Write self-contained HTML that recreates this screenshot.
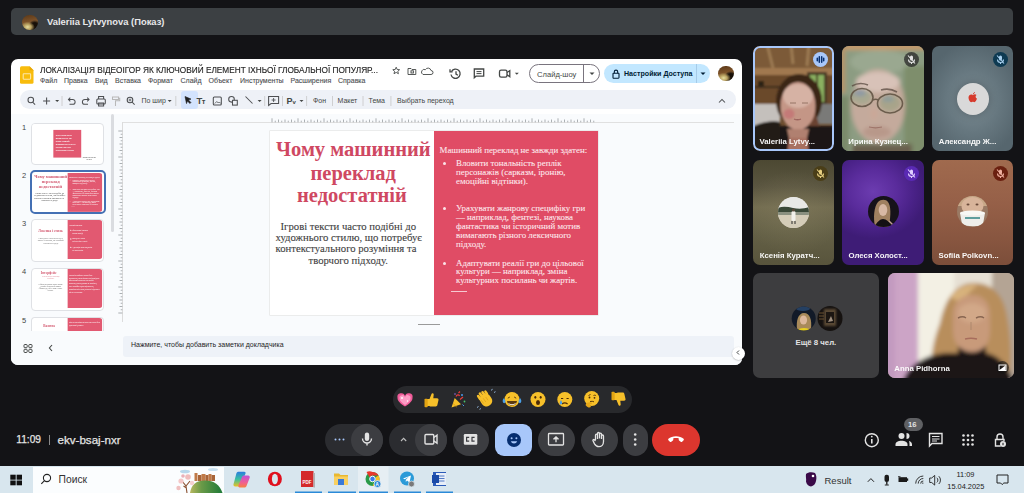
<!DOCTYPE html>
<html><head><meta charset="utf-8">
<style>
*{margin:0;padding:0;box-sizing:border-box}
html,body{width:1024px;height:493px;overflow:hidden;background:#131316;font-family:"Liberation Sans",sans-serif}
body{position:relative}
.a{position:absolute;white-space:nowrap}
svg.a{overflow:visible}
.tile{position:absolute;border-radius:7px;overflow:hidden}
.nm{position:absolute;left:7px;top:91px;color:#fff;font-size:7.8px;font-weight:bold;opacity:.95;white-space:nowrap}
.mute{position:absolute;width:15px;height:15px;border-radius:50%;top:6px;left:59px}
.av{position:absolute;border-radius:50%;overflow:hidden}
.cb{position:absolute;top:424px;height:32px;border-radius:16px;background:#333438}
.m{position:absolute;top:77px;font-size:7px;color:#4a4d50;-webkit-text-stroke:0.1px #4a4d50;white-space:nowrap}
.tb{position:absolute;top:96.5px;font-size:7px;color:#444746;white-space:nowrap}
</style></head><body>
<!-- slides window -->
<div class="a" style="left:11px;top:59px;width:731px;height:306px;background:#fff;border-radius:7px"></div>
<div class="a" style="left:11px;top:114px;width:731px;height:251px;background:#f9fbfd;border-radius:0 0 7px 7px"></div>
<svg class="a" style="left:20px;top:66px" width="14" height="18" viewBox="0 0 14 18">
  <path d="M1.5 0.3h8l4 4v12a1.5 1.5 0 0 1-1.5 1.5h-10.5A1.5 1.5 0 0 1 0 16.3v-14.5A1.5 1.5 0 0 1 1.5 0.3z" fill="#f8bc0c"/>
  <path d="M9.5 0.3v4h4z" fill="#e8a80a"/>
  <rect x="3.2" y="7.8" width="7.4" height="5.4" rx="0.6" fill="none" stroke="#fde6a6" stroke-width="1.1"/>
</svg>
<div id="ttl" class="a" style="left:40px;top:64.2px;font-size:9.6px;color:#1f1f1f;-webkit-text-stroke:0.15px #1f1f1f;transform:scaleX(0.86);transform-origin:0 0">ЛОКАЛІЗАЦІЯ ВІДЕОІГОР ЯК КЛЮЧОВИЙ ЕЛЕМЕНТ ІХНЬОЇ ГЛОБАЛЬНОЇ ПОПУЛЯР...</div>
<div class="m" style="left:40px">Файл</div>
<div class="m" style="left:64px">Правка</div>
<div class="m" style="left:95px">Вид</div>
<div class="m" style="left:115px">Вставка</div>
<div class="m" style="left:148px">Формат</div>
<div class="m" style="left:180.5px">Слайд</div>
<div class="m" style="left:208.5px">Объект</div>
<div class="m" style="left:240px">Инструменты</div>
<div class="m" style="left:290.5px">Расширения</div>
<div class="m" style="left:338px">Справка</div>
<!-- title icons -->
<svg class="a" style="left:0;top:0" width="1" height="1" fill="none" stroke="#444746" stroke-width="0.9">
  <path d="M396.2 67.2l1 2.3 2.4.2-1.8 1.6.6 2.4-2.2-1.3-2.2 1.3.6-2.4-1.8-1.6 2.4-.2z"/>
  <path d="M408 68.5h3l1 1h3.8v5H408z"/><rect x="411" y="70.8" width="2.4" height="2.2"/>
  <path d="M423 74.5h8a2 2 0 0 0 0-4 3 3 0 0 0-5.6-.8A2.4 2.4 0 0 0 423 74.5z"/>
</svg>
<svg class="a" style="left:0;top:0" width="1" height="1" fill="none" stroke="#444746" stroke-width="1.3">
  <path d="M451.5 71.5A4.6 4.6 0 1 1 451 74.5"/><path d="M450 69.3v2.6h2.6"/><path d="M456 71.3v2.8l1.9 1.2"/>
  <path d="M474.3 69h9.4v7.2h-7.8l-1.6 1.6z"/><path d="M476.5 71.6h5M476.5 73.6h5" stroke-width="1"/>
  <rect x="499.5" y="70.2" width="7.5" height="7" rx="1.6"/><path d="M507 72.5l2.8-1.8v6l-2.8-1.8"/>
  <path d="M514.8 72.8h4l-2 2z" fill="#444746" stroke="none"/>
</svg>
<!-- slideshow button -->
<div class="a" style="left:529px;top:64px;width:71px;height:19px;border:1px solid #79747e;border-radius:10px;background:#fff"></div>
<div class="a" style="left:583px;top:65px;width:1px;height:17px;background:#79747e"></div>
<div id="ss" class="a" style="left:537px;top:69.5px;font-size:7.6px;color:#444746">Слайд-шоу</div>
<svg class="a" style="left:588.5px;top:72px" width="6" height="4"><path d="M0.5 0.5h5l-2.5 2.5z" fill="#444746"/></svg>
<!-- share button -->
<div class="a" style="left:604px;top:64.3px;width:106px;height:18.5px;background:#c2e7ff;border-radius:10px"></div>
<div class="a" style="left:695.5px;top:64px;width:1px;height:19px;background:#a6cbe8"></div>
<svg class="a" style="left:611.5px;top:68.5px" width="8" height="10" viewBox="0 0 8 10" fill="none" stroke="#001d35" stroke-width="1.1"><rect x="1" y="4.2" width="6" height="5" rx="0.6"/><path d="M2.3 4.2V2.8a1.7 1.7 0 0 1 3.4 0v1.4"/></svg>
<div id="sh" class="a" style="left:624px;top:69.5px;font-size:7.1px;font-weight:bold;color:#001d35">Настройки Доступа</div>
<svg class="a" style="left:699.5px;top:72px" width="6" height="4"><path d="M0.5 0.5h5l-2.5 2.5z" fill="#001d35"/></svg>
<!-- avatar -->
<div class="a" style="left:718px;top:65.7px;width:15.5px;height:15.5px;border-radius:50%;background:radial-gradient(ellipse 45% 35% at 35% 80%,#e8e0a0 0,#b8a060 50%,rgba(0,0,0,0) 100%),radial-gradient(circle at 80% 80%,#181008 0,#181008 25%,rgba(0,0,0,0) 40%),linear-gradient(170deg,#5a3818 0,#7a5028 40%,#8a6a40 70%,#c0b080 100%)"></div>

<!-- toolbar -->
<div class="a" style="left:20px;top:90.3px;width:716px;height:18.7px;background:#eef1f7;border-radius:9.5px"></div>
<div class="a" style="left:181px;top:91px;width:17px;height:18px;background:#d3e3fd;border-radius:3px"></div>
<svg class="a" style="left:0;top:0.8px" width="1" height="1" fill="none" stroke="#4d4f52" stroke-width="1.05">
  <circle cx="30.8" cy="99" r="2.8"/><path d="M32.5 101l2.6 2.6"/>
  <path d="M46.6 96.5v7M43.1 100h7"/>
  <path d="M55.2 99h4l-2 2z" fill="#444746" stroke="none"/>
  <path d="M62 95v10" stroke="#c7c7c7" stroke-width="0.8"/>
  <path d="M68.5 98.5h4.2a2.4 2.4 0 0 1 0 4.8H69.5"/><path d="M70.3 96.7L68.5 98.5l1.8 1.8"/>
  <path d="M89 98.5h-4.2a2.4 2.4 0 0 0 0 4.8H88"/><path d="M87.2 96.7L89 98.5l-1.8 1.8"/>
  <rect x="96.8" y="98" width="8.5" height="5" rx="1"/><path d="M98.6 98v-2.5h5V98M98.6 102h5v3h-5z"/>
  <path d="M112.5 96h6v2.5h-6zM118.5 97.3h1.2v2.5h-4.2v1.5M115.5 101.3v3.7" stroke="#b8b8b8"/>
  <circle cx="130" cy="99" r="2.8"/><path d="M132 101l2.6 2.6"/><path d="M128.6 99h2.8M130 97.6v2.8" stroke-width="0.8"/>
  <path d="M167.7 99h4l-2 2z" fill="#444746" stroke="none"/>
  <path d="M175.8 95v10" stroke="#c7c7c7" stroke-width="0.8"/>
  <path d="M185 95.5l6 2.6-2.5 1 2.4 2.4-1 1-2.4-2.4-1 2.5z" fill="#1f1f1f" stroke="#1f1f1f" stroke-width="0.6"/>
  <rect x="213.3" y="96" width="8" height="8" rx="1"/><path d="M214.8 102.5l2-2 1.5 1.5 1-1 1.5 1.5" stroke-width="0.8"/>
  <circle cx="231.5" cy="98.3" r="2.8"/><rect x="232.5" y="99.3" width="4.8" height="4.8" fill="#eef1f7"/>
  <path d="M245.5 95.5l7 7"/>
  <path d="M257.6 99h4l-2 2z" fill="#444746" stroke="none"/>
  <path d="M264.7 95v10" stroke="#c7c7c7" stroke-width="0.8"/>
  <path d="M268.6 95.5h10v7h-7.5l-2.5 2z"/><path d="M273.6 97v4M271.6 99h4" stroke-width="0.9"/>
  <path d="M282.5 95v10" stroke="#c7c7c7" stroke-width="0.8"/>
  <path d="M299.5 99h4l-2 2z" fill="#444746" stroke="none"/>
  <path d="M306.6 95v10M332.5 95v10M363 95v10M390.9 95v10" stroke="#c7c7c7" stroke-width="0.8"/>
  <path d="M719 101.5l3-3 3 3"/>
</svg>
<div class="a" style="left:196.5px;top:95px;font-size:9.5px;font-weight:bold;color:#444746;letter-spacing:-0.5px">T<span style="font-size:7.5px">т</span></div>
<div class="a" style="left:286.5px;top:95.5px;font-size:9px;font-weight:bold;color:#444746">P<span style="font-size:6px">v</span></div>
<div class="tb" style="left:141.5px">По шир</div>
<div class="tb" style="left:313px">Фон</div>
<div class="tb" style="left:337.5px">Макет</div>
<div class="tb" style="left:368.5px">Тема</div>
<div class="tb" style="left:397px">Выбрать переход</div>
<style>
.sl{position:absolute;width:328px;height:184.5px;background:#fff}
.sl .rp{position:absolute;background:#e04c65}
.st{position:absolute;white-space:nowrap;line-height:1;font-family:"Liberation Serif",serif}
.t1{font-size:20.5px;font-weight:bold;color:#cf4862}
.t2{font-size:10.7px;color:#3e3e3e;-webkit-text-stroke:0.1px #3e3e3e}
.t3{font-size:8.9px;color:#fde9ed;-webkit-text-stroke:0.08px #fde9ed}
.dot{position:absolute;width:3px;height:3px;border-radius:50%;background:#fbe4e8}
.ln{position:absolute;width:16.5px;height:1px;background:#f6c9d1}
</style>
<div class="sl" style="left:269.5px;top:130.5px;box-shadow:0 0 0 0.6px #e2e2e2">
<div class="rp" style="left:164.3px;top:0.3px;width:163.8px;height:184px"></div>
<div class="st t1" style="left:6.5px;top:8.3px">Чому машинний</div>
<div class="st t1" style="left:41.0px;top:32.1px">переклад</div>
<div class="st t1" style="left:27.5px;top:54.2px">недостатній</div>
<div class="st t2" style="left:11.0px;top:90.1px">Ігрові тексти часто подібні до</div>
<div class="st t2" style="left:6.0px;top:101.3px">художнього стилю, що потребує</div>
<div class="st t2" style="left:6.0px;top:112.9px">контекстуального розуміння та</div>
<div class="st t2" style="left:39.0px;top:124.1px">творчого підходу.</div>
<div class="st t3" style="left:170.0px;top:15.0px">Машинний переклад не завжди здатен:</div>
<div class="dot" style="left:173.7px;top:31.5px"></div>
<div class="st t3" style="left:186.5px;top:28.6px">Вловити тональність реплік</div>
<div class="st t3" style="left:186.5px;top:37.3px">персонажів (сарказм, іронію,</div>
<div class="st t3" style="left:186.5px;top:46.2px">емоційні відтінки).</div>
<div class="dot" style="left:173.7px;top:76.5px"></div>
<div class="st t3" style="left:186.5px;top:73.7px">Урахувати жанрову специфіку гри</div>
<div class="st t3" style="left:186.5px;top:82.3px">— наприклад, фентезі, наукова</div>
<div class="st t3" style="left:186.5px;top:91.8px">фантастика чи історичний мотив</div>
<div class="st t3" style="left:186.5px;top:100.3px">вимагають різного лексичного</div>
<div class="st t3" style="left:186.5px;top:109.5px">підходу.</div>
<div class="dot" style="left:173.7px;top:131.5px"></div>
<div class="st t3" style="left:186.5px;top:128.0px">Адаптувати реалії гри до цільової</div>
<div class="st t3" style="left:186.5px;top:136.7px">культури — наприклад, зміна</div>
<div class="st t3" style="left:186.5px;top:145.0px">культурних посилань чи жартів.</div>
<div class="ln" style="left:181.0px;top:160.0px"></div>
</div>
<!-- left panel thumbnails -->
<div class="a" style="left:22px;top:123px;font-size:7.5px;color:#444746">1</div>
<div class="a" style="left:22px;top:171px;font-size:7.5px;color:#444746">2</div>
<div class="a" style="left:22px;top:219px;font-size:7.5px;color:#444746">3</div>
<div class="a" style="left:22px;top:267px;font-size:7.5px;color:#444746">4</div>
<div class="a" style="left:22px;top:316px;font-size:7.5px;color:#444746">5</div>
<!-- thumb 1 -->
<div class="a" style="left:31px;top:122.5px;width:73px;height:42.5px;background:#fff;border:1px solid #dfe1e5;border-radius:4px"></div>
<div class="sl" style="left:32.3px;top:123.5px;transform:scale(0.2112);transform-origin:0 0;border-radius:14px;overflow:hidden;opacity:0.92">
<div class="rp" style="left:101px;top:27.5px;width:132px;height:131.5px"></div>
<div class="st" style="left:113px;top:44px;font-size:12px;font-weight:bold;color:#fff;line-height:14.5px;font-family:'Liberation Sans',sans-serif;transform:scaleX(0.9);transform-origin:0 0">ЛОКАЛІЗАЦІЯ<br>ВІДЕОІГОР ЯК<br>КЛЮЧОВИЙ<br>ЕЛЕМЕНТ ЇХНЬОЇ<br>ГЛОБАЛЬНОЇ<br>ПОПУЛЯРНОСТІ</div>
<div class="st" style="left:240px;top:157px;font-size:7px;color:#333;line-height:8px;text-align:center;font-family:'Liberation Sans',sans-serif">Литвинова Валерія<br>ЛЗ-21-1</div>

</div>
<!-- thumb 2 (selected) -->
<div class="a" style="left:30px;top:170.3px;width:75.5px;height:43.5px;background:#fff;border:2px solid #4470b4;border-radius:5px"></div>
<div class="sl" style="left:33.3px;top:173.3px;transform:scale(0.2112);transform-origin:0 0;border-radius:14px;overflow:hidden;opacity:0.92">
<div class="rp" style="left:164.3px;top:0.3px;width:163.8px;height:184px"></div>
<div class="st t1" style="left:6.5px;top:8.3px">Чому машинний</div>
<div class="st t1" style="left:41.0px;top:32.1px">переклад</div>
<div class="st t1" style="left:27.5px;top:54.2px">недостатній</div>
<div class="st t2" style="left:11.0px;top:90.1px">Ігрові тексти часто подібні до</div>
<div class="st t2" style="left:6.0px;top:101.3px">художнього стилю, що потребує</div>
<div class="st t2" style="left:6.0px;top:112.9px">контекстуального розуміння та</div>
<div class="st t2" style="left:39.0px;top:124.1px">творчого підходу.</div>
<div class="st t3" style="left:170.0px;top:15.0px">Машинний переклад не завжди здатен:</div>
<div class="dot" style="left:173.7px;top:31.5px"></div>
<div class="st t3" style="left:186.5px;top:28.6px">Вловити тональність реплік</div>
<div class="st t3" style="left:186.5px;top:37.3px">персонажів (сарказм, іронію,</div>
<div class="st t3" style="left:186.5px;top:46.2px">емоційні відтінки).</div>
<div class="dot" style="left:173.7px;top:76.5px"></div>
<div class="st t3" style="left:186.5px;top:73.7px">Урахувати жанрову специфіку гри</div>
<div class="st t3" style="left:186.5px;top:82.3px">— наприклад, фентезі, наукова</div>
<div class="st t3" style="left:186.5px;top:91.8px">фантастика чи історичний мотив</div>
<div class="st t3" style="left:186.5px;top:100.3px">вимагають різного лексичного</div>
<div class="st t3" style="left:186.5px;top:109.5px">підходу.</div>
<div class="dot" style="left:173.7px;top:131.5px"></div>
<div class="st t3" style="left:186.5px;top:128.0px">Адаптувати реалії гри до цільової</div>
<div class="st t3" style="left:186.5px;top:136.7px">культури — наприклад, зміна</div>
<div class="st t3" style="left:186.5px;top:145.0px">культурних посилань чи жартів.</div>
<div class="ln" style="left:181.0px;top:160.0px"></div>
</div>
<!-- thumb 3 -->
<div class="a" style="left:31.4px;top:219.4px;width:73px;height:42.6px;background:#fff;border:1px solid #dfe1e5;border-radius:4px"></div>
<div class="sl" style="left:32.5px;top:220.4px;transform:scale(0.2112);transform-origin:0 0;border-radius:14px;overflow:hidden;opacity:0.92">
<div class="rp" style="left:164.3px;top:0;width:163.7px;height:184.5px"></div>
<div class="st" style="left:25px;top:44px;font-size:16px;font-weight:bold;color:#d04a63">Лексика і стиль</div>
<div class="st" style="left:22px;top:80px;font-size:8px;color:#444;line-height:11.8px;text-align:center;width:126px;white-space:normal">Ігрові діалоги часто містять сленг, жаргон і неологізми, що потребують креативного підходу</div>
<div class="st" style="left:172px;top:22px;font-size:7.5px;font-weight:bold;color:#fbe4e8">Основні виклики:</div>
<div class="st" style="left:186px;top:43px;font-size:8px;font-weight:bold;color:#fbe4e8;line-height:12.5px">Збереження ігрового<br>стилю оповіді</div>
<div class="st" style="left:186px;top:84px;font-size:8px;font-weight:bold;color:#fbe4e8;line-height:12.5px">Передача гумору<br>та ігор слів у тексті</div>
<div class="st" style="left:186px;top:124px;font-size:8px;font-weight:bold;color:#fbe4e8;line-height:12.5px">Адаптація назв предметів<br>та персонажів</div>
<div class="dot" style="left:176px;top:46px;width:6px;height:6px"></div><div class="dot" style="left:176px;top:87px;width:6px;height:6px"></div><div class="dot" style="left:176px;top:127px;width:6px;height:6px"></div>

</div>
<!-- thumb 4 -->
<div class="a" style="left:31.4px;top:268.4px;width:73px;height:42.2px;background:#fff;border:1px solid #dfe1e5;border-radius:4px"></div>
<div class="sl" style="left:32.5px;top:269.4px;transform:scale(0.2112);transform-origin:0 0;border-radius:14px;overflow:hidden;opacity:0.92">
<div class="rp" style="left:164.3px;top:0;width:163.7px;height:184.5px"></div>
<div class="st" style="left:37px;top:10px;font-size:16px;font-weight:bold;color:#d04a63">Інтерфейс</div>
<div class="st" style="left:28px;top:29px;font-size:7px;color:#d86a7e;line-height:11px;text-align:center;width:112px;white-space:normal">технічні аспекти локалізації інтерфейсу</div>
<div class="st" style="left:14px;top:70px;font-size:7px;color:#444;line-height:9.6px;text-align:center;width:138px;white-space:normal">• Обмеження довжини рядків і кнопок<br>• Шрифти та кодування символів<br>• Формати дат, чисел і валют у різних регіонах</div>
<div class="st" style="left:170px;top:22px;font-size:8px;font-weight:bold;color:#fbe4e8;line-height:13.6px;width:150px;white-space:normal">Тексти інтерфейсу мають бути короткими, зрозумілими та відповідати обмеженням простору на екрані. Переклад часто довший за оригінал, тому потрібна адаптація макета, перевірка всіх меню, кнопок і підказок у грі та тестування.</div>

</div>
<!-- thumb 5 (cut) -->
<div class="a" style="left:31.4px;top:317px;width:73px;height:14px;background:#fff;border:1px solid #dfe1e5;border-bottom:none;border-radius:4px 4px 0 0"></div>
<div class="sl" style="left:32.5px;top:318px;transform:scale(0.2112);transform-origin:0 0;border-radius:14px;overflow:hidden;opacity:0.92">
<div class="rp" style="left:164.3px;top:0;width:163.7px;height:184.5px"></div>
<div class="st" style="left:48px;top:31px;font-size:16px;font-weight:bold;color:#d04a63">Валюта</div>
<div class="st" style="left:170px;top:17px;font-size:7.5px;font-weight:bold;color:#fbe4e8;line-height:13.5px;width:150px;white-space:normal">Ціни та внутрішня валюта гри мають бути адаптовані до ринку</div>

</div>
<!-- panel bottom cover -->
<div class="a" style="left:11px;top:331px;width:100px;height:33px;background:#f9fbfd;border-radius:0 0 0 7px"></div>
<svg class="a" style="left:0;top:0" width="1" height="1" fill="none" stroke="#444746" stroke-width="1">
  <rect x="24" y="344.5" width="3.2" height="3.2" rx="0.8"/><rect x="28.8" y="344.5" width="3.2" height="3.2" rx="0.8"/>
  <rect x="24" y="349.3" width="3.2" height="3.2" rx="0.8"/><rect x="28.8" y="349.3" width="3.2" height="3.2" rx="0.8"/>
  <path d="M52 345l-2.6 3 2.6 3" stroke-width="1.1"/>
</svg>
<!-- scrollbar -->
<div class="a" style="left:111px;top:114px;width:3px;height:118px;background:#dadce0;border-radius:2px"></div>

<!-- canvas -->
<div class="a" style="left:122px;top:122px;width:612px;height:1px;background:#e0e0e0"></div>
<div class="a" style="left:122px;top:122px;width:1px;height:200px;background:#dcdcdc"></div>
<svg class="a" style="left:0;top:0" width="1" height="1" stroke="#80868b" stroke-width="0.65">
  <path d="M272.00 118.30v4M275.25 120.70v1.6M278.50 119.50v2.8M281.75 120.70v1.6M285.00 119.50v2.8M288.25 120.70v1.6M291.50 119.50v2.8M294.75 120.70v1.6M298.00 118.30v4M301.25 120.70v1.6M304.50 119.50v2.8M307.75 120.70v1.6M311.00 119.50v2.8M314.25 120.70v1.6M317.50 119.50v2.8M320.75 120.70v1.6M324.00 118.30v4M327.25 120.70v1.6M330.50 119.50v2.8M333.75 120.70v1.6M337.00 119.50v2.8M340.25 120.70v1.6M343.50 119.50v2.8M346.75 120.70v1.6M350.00 118.30v4M353.25 120.70v1.6M356.50 119.50v2.8M359.75 120.70v1.6M363.00 119.50v2.8M366.25 120.70v1.6M369.50 119.50v2.8M372.75 120.70v1.6M376.00 118.30v4M379.25 120.70v1.6M382.50 119.50v2.8M385.75 120.70v1.6M389.00 119.50v2.8M392.25 120.70v1.6M395.50 119.50v2.8M398.75 120.70v1.6M402.00 118.30v4M405.25 120.70v1.6M408.50 119.50v2.8M411.75 120.70v1.6M415.00 119.50v2.8M418.25 120.70v1.6M421.50 119.50v2.8M424.75 120.70v1.6M428.00 118.30v4M431.25 120.70v1.6M434.50 119.50v2.8M437.75 120.70v1.6M441.00 119.50v2.8M444.25 120.70v1.6M447.50 119.50v2.8M450.75 120.70v1.6M454.00 118.30v4M457.25 120.70v1.6M460.50 119.50v2.8M463.75 120.70v1.6M467.00 119.50v2.8M470.25 120.70v1.6M473.50 119.50v2.8M476.75 120.70v1.6M480.00 118.30v4M483.25 120.70v1.6M486.50 119.50v2.8M489.75 120.70v1.6M493.00 119.50v2.8M496.25 120.70v1.6M499.50 119.50v2.8M502.75 120.70v1.6M506.00 118.30v4M509.25 120.70v1.6M512.50 119.50v2.8M515.75 120.70v1.6M519.00 119.50v2.8M522.25 120.70v1.6M525.50 119.50v2.8M528.75 120.70v1.6M532.00 118.30v4M535.25 120.70v1.6M538.50 119.50v2.8M541.75 120.70v1.6M545.00 119.50v2.8M548.25 120.70v1.6M551.50 119.50v2.8M554.75 120.70v1.6M558.00 118.30v4M561.25 120.70v1.6M564.50 119.50v2.8M567.75 120.70v1.6M571.00 119.50v2.8M574.25 120.70v1.6M577.50 119.50v2.8M580.75 120.70v1.6M584.00 118.30v4M587.25 120.70v1.6M590.50 119.50v2.8M593.75 120.70v1.6M118.30 131.00h4M120.70 134.25h1.6M119.50 137.50h2.8M120.70 140.75h1.6M119.50 144.00h2.8M120.70 147.25h1.6M119.50 150.50h2.8M120.70 153.75h1.6M118.30 157.00h4M120.70 160.25h1.6M119.50 163.50h2.8M120.70 166.75h1.6M119.50 170.00h2.8M120.70 173.25h1.6M119.50 176.50h2.8M120.70 179.75h1.6M118.30 183.00h4M120.70 186.25h1.6M119.50 189.50h2.8M120.70 192.75h1.6M119.50 196.00h2.8M120.70 199.25h1.6M119.50 202.50h2.8M120.70 205.75h1.6M118.30 209.00h4M120.70 212.25h1.6M119.50 215.50h2.8M120.70 218.75h1.6M119.50 222.00h2.8M120.70 225.25h1.6M119.50 228.50h2.8M120.70 231.75h1.6M118.30 235.00h4M120.70 238.25h1.6M119.50 241.50h2.8M120.70 244.75h1.6M119.50 248.00h2.8M120.70 251.25h1.6M119.50 254.50h2.8M120.70 257.75h1.6M118.30 261.00h4M120.70 264.25h1.6M119.50 267.50h2.8M120.70 270.75h1.6M119.50 274.00h2.8M120.70 277.25h1.6M119.50 280.50h2.8M120.70 283.75h1.6M118.30 287.00h4M120.70 290.25h1.6M119.50 293.50h2.8M120.70 296.75h1.6M119.50 300.00h2.8M120.70 303.25h1.6M119.50 306.50h2.8M120.70 309.75h1.6M118.30 313.00h4"/>
</svg>

<!-- slide -->
<div class="a" style="left:418px;top:323.5px;width:22px;height:1.2px;background:#9a9a9a"></div>

<!-- notes -->
<div class="a" style="left:123px;top:336px;width:611px;height:21px;background:#eef2f8;border-radius:3px"></div>
<div id="notes" class="a" style="left:131px;top:340.5px;font-size:7px;color:#1f1f1f">Нажмите, чтобы добавить заметки докладчика</div>
<div class="a" style="left:731.5px;top:346.5px;width:13px;height:13px;border-radius:50%;background:#fff;box-shadow:0 0.5px 1.5px rgba(0,0,0,.3)"></div>
<svg class="a" style="left:0;top:0" width="1" height="1" fill="none" stroke="#444746" stroke-width="1"><path d="M739 350.5l-2 2 2 2"/></svg>
<!-- header -->
<div class="a" style="left:11px;top:8px;width:1002px;height:27px;background:#3c4043;border-radius:5px"></div>
<div class="a" style="left:22px;top:14.5px;width:15.5px;height:15.5px;border-radius:50%;background:radial-gradient(ellipse 45% 35% at 35% 80%,#e8e0a0 0,#b8a060 50%,rgba(0,0,0,0) 100%),radial-gradient(circle at 80% 80%,#181008 0,#181008 25%,rgba(0,0,0,0) 40%),linear-gradient(170deg,#5a3818 0,#7a5028 40%,#8a6a40 70%,#c0b080 100%)"></div>
<div id="hname" class="a" style="left:47px;top:16px;color:#e8e8ea;font-size:9.4px;font-weight:bold">Valeriia Lytvynova (Показ)</div>

<!-- bottom left -->
<div id="clk" class="a" style="left:16.3px;top:434.2px;color:#e3e3e3;font-size:10.2px;-webkit-text-stroke:0.25px #e3e3e3">11:09</div>
<div class="a" style="left:49px;top:435px;width:1px;height:10px;background:#8a8a8a"></div>
<div id="code" class="a" style="left:57.5px;top:433.2px;color:#e3e3e3;font-size:11.6px;-webkit-text-stroke:0.25px #e3e3e3">ekv-bsaj-nxr</div>
<svg width="0" height="0" style="position:absolute">
  <defs>
    <filter id="b2" x="-50%" y="-50%" width="200%" height="200%"><feGaussianBlur stdDeviation="2"/></filter>
    <filter id="b3" x="-50%" y="-50%" width="200%" height="200%"><feGaussianBlur stdDeviation="3.5"/></filter>
    <filter id="b1" x="-50%" y="-50%" width="200%" height="200%"><feGaussianBlur stdDeviation="1"/></filter>
  </defs>
</svg>
<!-- tile 1: Valeriia -->
<div class="tile" style="left:753px;top:46px;width:81px;height:105px;background:#6e4e30">
  <svg width="81" height="105" style="position:absolute;left:0;top:0">
    <g filter="url(#b1)">
      <rect x="-3" y="-3" width="87" height="34" fill="#7c5a38"/>
      <path d="M14 -2l6 24M38 -2l2 20M56 -2l-2 22" stroke="#9c7a52" stroke-width="3"/>
      <rect x="-3" y="22" width="87" height="7" fill="#a07850"/>
      <rect x="-3" y="29" width="87" height="40" fill="#6a4a2c"/>
      <rect x="-3" y="40" width="30" height="2" fill="#3a2a1a"/>
      <rect x="5" y="35" width="6" height="5" fill="#2a2018"/>
      <rect x="54" y="26" width="20" height="33" fill="#4a3a28"/>
      <rect x="57" y="29" width="14" height="27" fill="#8ab060"/>
      <rect x="63" y="29" width="2" height="27" fill="#4a3a28"/>
      <rect x="-3" y="58" width="30" height="22" fill="#c4c0bc"/>
      <rect x="60" y="58" width="24" height="20" fill="#7a7a78"/>
      <ellipse cx="46" cy="55" rx="23" ry="27" fill="#3a2616"/>
      <path d="M58 60c7 10 11 27 13 47h-16z" fill="#6a4230"/>
      <rect x="-3" y="80" width="87" height="30" fill="#1c1816"/>
      <path d="M-3 82c10-6 22-8 30-6v34h-30z" fill="#221c18"/>
      <ellipse cx="45" cy="60" rx="17.5" ry="24" fill="#c49686"/>
      <ellipse cx="45" cy="50" rx="15" ry="12" fill="#d6b2a4"/>
      <ellipse cx="36" cy="68" rx="5.5" ry="5" fill="#c47a78"/>
      <path d="M34 83h22l-2 9h-18z" fill="#b08070"/>
      <path d="M36 92h18l2 16h-22z" fill="#a87060"/>
    </g>
    <path d="M37 57h6M49 57h6" stroke="#6a4a3a" stroke-width="1" opacity="0.6"/>
    <path d="M41 73c2 1 5 1 7 0" stroke="#8a4a4a" stroke-width="1.2" opacity="0.6"/>
  </svg>
  <div style="position:absolute;inset:0;border:2px solid #a8c7fa;border-radius:7px"></div>
  <div class="nm" style="left:6.5px">Valeriia Lytvy...</div>
  <div class="mute" style="left:60px;background:#a8c7fa"></div>
  <svg class="a" style="left:60px;top:6px" width="15" height="15"><path d="M4.3 6.3v2.4M6.3 4.8v5.4M8.7 4.8v5.4M10.7 6.3v2.4" stroke="#062e6f" stroke-width="1.5" stroke-linecap="round"/></svg>
</div>
<!-- tile 2: Irina -->
<div class="tile" style="left:842px;top:46px;width:82px;height:105px;background:#8e9c84">
  <svg width="82" height="105" style="position:absolute;left:0;top:0">
    <g filter="url(#b2)">
      <rect x="-3" y="-3" width="90" height="9" fill="#c49a6c"/>
      <rect x="-3" y="-3" width="6" height="50" fill="#b89468"/>
      <rect x="3" y="4" width="84" height="106" fill="#8c9c82"/>
      <ellipse cx="38" cy="16" rx="30" ry="12" fill="#9aa890"/>
      <rect x="62" y="20" width="26" height="90" fill="#7e8e6c"/>
      <rect x="-3" y="50" width="10" height="60" fill="#7a8a6a"/>
      <ellipse cx="36" cy="60" rx="27" ry="37" fill="#c4aa9c"/>
      <ellipse cx="36" cy="36" rx="22" ry="10" fill="#d8c2b8"/>
      <ellipse cx="20" cy="51" rx="10" ry="8" fill="#a8a890"/>
      <ellipse cx="48" cy="57" rx="11" ry="9" fill="#a8a48a"/>
      <ellipse cx="18" cy="47" rx="6" ry="3" fill="#7a90b0" opacity="0.7"/>
      <ellipse cx="46" cy="53" rx="6" ry="3" fill="#7a98a8" opacity="0.6"/>
      <ellipse cx="32" cy="68" rx="4" ry="6" fill="#caa898"/>
      <ellipse cx="35" cy="86" rx="14" ry="6" fill="#b8988a"/>
      <rect x="10" y="98" width="60" height="12" fill="#6a6050"/>
    </g>
    <g fill="none" stroke="#5e5040" stroke-width="1.6" opacity="0.85">
      <ellipse cx="20" cy="51.5" rx="11" ry="9"/><ellipse cx="48" cy="57.5" rx="12.5" ry="9.5"/>
      <path d="M31 54c1.5-1 3.5-1 5.5 0"/>
    </g>
    <path d="M10 40c5-3 11-3 16-1M39 44c5-1.5 11-1 16 2" stroke="#5a4a40" stroke-width="1.6" fill="none" opacity="0.75"/>
    <path d="M27 81c4 1 9 1 13 0" stroke="#8a5a50" stroke-width="1.2" fill="none" opacity="0.6"/>
  </svg>
  <div class="nm" style="left:6.3px">Ирина Кузнец...</div>
  <div class="mute" style="left:62px;background:rgba(40,40,40,.75)"></div><svg class="a" style="left:62px;top:6px" width="15" height="15" viewBox="0 0 15 15" fill="none" stroke="#e3e3e3" stroke-width="1.1"><rect x="6" y="3.5" width="3" height="5" rx="1.5" fill="#e3e3e3" stroke="none"/><path d="M4.5 7.5a3 3 0 0 0 6 0M7.5 10.5v1.5M4 3.5l7 8"/></svg>
</div>
<!-- tile 3: Alexandr -->
<div class="tile" style="left:932px;top:46px;width:81px;height:105px;background:radial-gradient(ellipse 60% 55% at 50% 52%,#7c8c94 0,#66777f 55%,#56666e 100%)">
  <div class="av" style="left:24.5px;top:37px;width:32px;height:32px;background:#d9d9d9;box-shadow:0 0 8px rgba(0,0,0,.25)"></div>
  <svg class="a" style="left:35.5px;top:46px" width="10" height="12" viewBox="0 0 10 12"><path d="M5 3.2c1-1 2.5-1.3 3.5-.2-1.3.8-1.2 3 .5 3.6-.5 1.8-1.6 3.6-2.7 3.6-.8 0-1-.4-1.6-.4s-.9.4-1.6.4C2 10.2.5 7.8.5 5.6.5 3.6 2 2.6 3.2 2.6c.8 0 1.3.6 1.8.6z" fill="#d63a2c"/><path d="M5.2 2.4c.1-1 .8-1.8 1.7-2" stroke="#d63a2c" stroke-width="0.9" fill="none"/></svg>
  <div class="nm" style="left:6.8px">Александр Ж...</div>
  <div class="mute" style="left:61px;background:#0e3a52"></div><svg class="a" style="left:61px;top:6px" width="15" height="15" viewBox="0 0 15 15" fill="none" stroke="#a8d0f0" stroke-width="1.1"><rect x="6" y="3.5" width="3" height="5" rx="1.5" fill="#a8d0f0" stroke="none"/><path d="M4.5 7.5a3 3 0 0 0 6 0M7.5 10.5v1.5M4 3.5l7 8"/></svg>
</div>
<!-- tile 4: Ksenia -->
<div class="tile" style="left:753px;top:160px;width:81px;height:105px;background:linear-gradient(180deg,#4c4832 0,#5a5540 25%,#726c50 45%,#646046 70%,#58543c 100%)">
  <div class="a" style="left:0;top:0;width:81px;height:105px;background:radial-gradient(ellipse 60% 40% at 50% 50%,rgba(140,132,100,.35) 0,rgba(0,0,0,0) 100%)"></div>
  <svg class="a" style="left:25px;top:36.5px" width="31" height="31" viewBox="0 0 31 31">
    <defs><clipPath id="ck"><circle cx="15.5" cy="15.5" r="15.5"/></clipPath></defs>
    <g clip-path="url(#ck)">
      <rect width="31" height="31" fill="#d8d4c8"/>
      <rect width="31" height="12" fill="#e8e8e6"/>
      <path d="M0 11c5-2 10-1 15 0s11 1 16-1v6H0z" fill="#3a4838"/>
      <rect y="15" width="31" height="3" fill="#8a9080"/>
      <rect y="18" width="31" height="13" fill="#d4ccb8"/>
      <rect x="13.5" y="14" width="4" height="10" rx="1.5" fill="#f2f0ea"/>
      <circle cx="15.5" cy="13" r="1.6" fill="#5a4a3a"/>
      <path d="M14 24v3M17 24v3" stroke="#2a2a2a" stroke-width="1"/>
    </g>
  </svg>
  <div class="nm" style="left:6.8px">Ксенія Куратч...</div>
  <div class="mute" style="left:60px;background:#4a3e18"></div><svg class="a" style="left:60px;top:6px" width="15" height="15" viewBox="0 0 15 15" fill="none" stroke="#e8d080" stroke-width="1.1"><rect x="6" y="3.5" width="3" height="5" rx="1.5" fill="#e8d080" stroke="none"/><path d="M4.5 7.5a3 3 0 0 0 6 0M7.5 10.5v1.5M4 3.5l7 8"/></svg>
</div>
<!-- tile 5: Olesia -->
<div class="tile" style="left:842px;top:160px;width:82px;height:105px;background:radial-gradient(ellipse 65% 45% at 38% 30%,#6c3cb0 0,#5a2c9c 45%,#4a2288 75%,#3e1c76 100%)">
  <svg class="a" style="left:25.7px;top:36px" width="31" height="31" viewBox="0 0 31 31">
    <defs><clipPath id="co"><circle cx="15.5" cy="15.5" r="15.5"/></clipPath></defs>
    <g clip-path="url(#co)">
      <rect width="31" height="31" fill="#16121a"/>
      <path d="M7 31c-2-10-1-20 3-25 3-3 8-3 10 0 3 4 3 12 1 25z" fill="#a08060"/>
      <ellipse cx="15" cy="14" rx="4.3" ry="6" fill="#d8b8a4"/>
      <path d="M6 31c3-5 6-8 9-8s7 3 10 8z" fill="#141014"/>
      <path d="M21 25l4 4" stroke="#c0a090" stroke-width="1.5"/>
    </g>
  </svg>
  <div class="nm" style="left:6.5px">Олеся Холост...</div>
  <div class="mute" style="left:62px;background:#5a2ab4"></div><svg class="a" style="left:62px;top:6px" width="15" height="15" viewBox="0 0 15 15" fill="none" stroke="#e0d0ff" stroke-width="1.1"><rect x="6" y="3.5" width="3" height="5" rx="1.5" fill="#e0d0ff" stroke="none"/><path d="M4.5 7.5a3 3 0 0 0 6 0M7.5 10.5v1.5M4 3.5l7 8"/></svg>
</div>
<!-- tile 6: Sofiia -->
<div class="tile" style="left:932px;top:160px;width:81px;height:105px;background:linear-gradient(180deg,#a06a4e 0,#966048 40%,#885640 75%,#7c4e3a 100%)">
  <svg class="a" style="left:25px;top:36px" width="31" height="31" viewBox="0 0 31 31">
    <defs><clipPath id="cs"><circle cx="15.5" cy="15.5" r="15.5"/></clipPath></defs>
    <g clip-path="url(#cs)">
      <rect width="31" height="31" fill="#9a7a64"/>
      <rect width="31" height="10" fill="#c8a888"/>
      <ellipse cx="15.5" cy="10" rx="11" ry="9" fill="#d8b49a"/>
      <ellipse cx="11" cy="8.5" rx="1.5" ry="1" fill="#6a4a3a"/><ellipse cx="20" cy="8.5" rx="1.5" ry="1" fill="#6a4a3a"/>
      <path d="M3 17h25l-2 11c-3 3-17 3-21 0z" fill="#eeeeea"/>
      <ellipse cx="15.5" cy="17" rx="12.5" ry="2.5" fill="#f8f8f4"/>
      <path d="M8 22h15" stroke="#3a8a8a" stroke-width="2" opacity="0.8"/>
    </g>
  </svg>
  <div class="nm" style="left:6.5px">Sofiia Polkovn...</div>
  <div class="mute" style="left:61px;background:#6a2010"></div><svg class="a" style="left:61px;top:6px" width="15" height="15" viewBox="0 0 15 15" fill="none" stroke="#f0b0a0" stroke-width="1.1"><rect x="6" y="3.5" width="3" height="5" rx="1.5" fill="#f0b0a0" stroke="none"/><path d="M4.5 7.5a3 3 0 0 0 6 0M7.5 10.5v1.5M4 3.5l7 8"/></svg>
</div>
<!-- tile 7: more -->
<div class="tile" style="left:753px;top:273px;width:126px;height:105px;background:#3d3d3f">
  <svg class="a" style="left:38px;top:32px" width="53" height="27" viewBox="0 0 53 27">
    <defs><clipPath id="c1"><circle cx="12.7" cy="13.4" r="12"/></clipPath><clipPath id="c2"><circle cx="39" cy="13.4" r="12.5"/></clipPath></defs>
    <g clip-path="url(#c1)">
      <rect x="0" y="0" width="26" height="27" fill="#121a28"/>
      <ellipse cx="12" cy="3.5" rx="7" ry="2.5" fill="#2a4a70" opacity="0.8"/>
      <path d="M6 24c-1-8 1-16 7-16s8 7 7 16z" fill="#a88a5a"/>
      <ellipse cx="12.5" cy="15" rx="3.6" ry="4.6" fill="#dcb89c"/>
      <path d="M5 27c1-3 4-4 8-4s7 1 9 4z" fill="#e8d020"/>
    </g>
    <circle cx="39" cy="13.4" r="12.8" fill="#3d3d3f"/>
    <g clip-path="url(#c2)">
      <rect x="26" y="0" width="26" height="27" fill="#161210"/>
      <rect x="33" y="4" width="12" height="17" fill="#5a4a36" filter="url(#b1)"/>
      <rect x="35" y="7" width="8" height="11" fill="#1c1612"/>
      <path d="M37 17l3-6 2 5z" fill="#a09080"/>
      <path d="M28 8h5M28 11h5M28 14h5" stroke="#6a5030" stroke-width="1"/>
    </g>
  </svg>
  <div id="more" class="a" style="left:42.5px;top:65px;font-size:7.8px;font-weight:bold;color:#e3e3e3">Ещё 8 чел.</div>
</div>
<!-- tile 8: Anna -->
<div class="tile" style="left:888px;top:273px;width:126px;height:105px;background:#c0a8a0">
  <svg width="126" height="105" style="position:absolute;left:0;top:0">
    <g filter="url(#b2)">
      <rect x="-5" y="-5" width="36" height="115" fill="#cca4c6"/>
      <rect x="-5" y="-5" width="12" height="115" fill="#c29ac0"/>
      <rect x="30" y="-5" width="40" height="115" fill="#f3f0e4"/>
      <rect x="66" y="-5" width="65" height="40" fill="#e6e0d4"/>
      <rect x="104" y="-5" width="27" height="115" fill="#b4a494"/>
      <path d="M44 100c-2-18 2-34 8-50 6-28 18-40 34-40s28 10 32 28c4 18 6 40 4 62z" fill="#b88e5c"/>
      <path d="M62 24c8-10 18-13 28-12-5 4-12 9-16 18z" fill="#d8b27c"/>
      <path d="M14 110c6-18 22-28 44-30h40c12 2 22 12 28 30z" fill="#1a1412"/>
      <rect x="70" y="70" width="28" height="20" fill="#1e1713"/>
      <path d="M65 42c0-13 8-20 19-20s18 7 18 20v16c0 13-7 21-18 21s-19-8-19-21z" fill="#c89a7a"/>
      <ellipse cx="84" cy="40" rx="14" ry="10" fill="#d2a888"/>
    </g>
    <g opacity="0.7">
      <path d="M70 45c3-1.5 6-1.5 8 0M88 45c3-1.5 6-1.5 8 0" stroke="#6a4a3a" stroke-width="1.4" fill="none"/>
      <path d="M83 49v8" stroke="#a8846a" stroke-width="1.2"/>
      <path d="M77 66c4-1 8-1 12 0" stroke="#9a5a50" stroke-width="1.6" fill="none"/>
    </g>
  </svg>
  <div class="nm" style="left:6.3px;top:90.5px">Anna Pidhorna</div>
  <div class="a" style="left:108px;top:88px;width:13px;height:13px;border-radius:50%;background:rgba(20,20,20,.6)"></div>
  <svg class="a" style="left:110px;top:90px" width="9" height="9"><rect x="1" y="2" width="7" height="5.5" fill="none" stroke="#fff" stroke-width="1"/><path d="M1.5 7l6-4.5V7z" fill="#fff"/></svg>
</div>
<!-- reactions -->
<div class="a" style="left:392.5px;top:386px;width:239px;height:27px;border-radius:13.5px;background:#28292c"></div>
<svg class="a" style="left:0;top:0" width="1" height="1">
  <!-- heart -->
  <path d="M405 406.5c-4.5-3-7.5-5.5-7.5-8.6a3.6 3.6 0 0 1 7.5-1.6 3.6 3.6 0 0 1 7.5 1.6c0 3.1-3 5.6-7.5 8.6z" fill="#f25c9a"/>
  <path d="M405 405c-3-2.2-5.5-4.2-5.5-6.6a2.6 2.6 0 0 1 5.5-1 2.6 2.6 0 0 1 5.5 1c0 2.4-2.5 4.4-5.5 6.6z" fill="#fb9cc4"/>
  <circle cx="402" cy="398" r="0.9" fill="#fff"/><circle cx="407.5" cy="401" r="0.7" fill="#fff"/>
  <!-- thumbs up -->
  <path d="M426 399h3.5l2-5c.3-1.2 2.2-1 2.2.6l-.4 3.6h3.8c1 0 1.6.8 1.4 1.7l-1.2 5.4c-.2.7-.8 1.2-1.5 1.2H431c-.7 0-1-.3-1.5-.6H426z" fill="#f7c02a"/>
  <rect x="424.5" y="398.8" width="3.2" height="8.4" rx="0.8" fill="#e2a412"/>
  <!-- party popper -->
  <path d="M451.5 407.5l3.2-9.5 6.3 6.3z" fill="#f7c02a"/>
  <path d="M453 403.5l3.5 3.3" stroke="#e0a010" stroke-width="1"/>
  <path d="M456 396.5c1-2 3-2 3.5-.5M460 399.5l3-2.5M458.5 393l1.5-1.5" stroke="#e83c3c" stroke-width="1.2" fill="none"/>
  <circle cx="462" cy="395" r="1" fill="#4a9ae8"/><circle cx="464.5" cy="401.5" r="0.9" fill="#4ac06a"/><circle cx="455" cy="394" r="0.8" fill="#9a6ae8"/>
  <path d="M462.5 404.5l1.5 1.5" stroke="#4a9ae8" stroke-width="1"/>
  <!-- clap -->
  <g transform="translate(486 400) rotate(-35)">
    <rect x="-5.5" y="-6.5" width="11" height="13" rx="5" fill="#f7c02a"/>
    <rect x="-5.5" y="-9" width="2.6" height="6" rx="1.3" fill="#f7c02a"/><rect x="-2.6" y="-10" width="2.6" height="6" rx="1.3" fill="#f7c02a"/>
    <rect x="0.3" y="-9.6" width="2.6" height="6" rx="1.3" fill="#f7c02a"/><rect x="3.1" y="-8.4" width="2.5" height="5" rx="1.25" fill="#f7c02a"/>
    <path d="M-4 -2.5v4M-1.3 -3v4.5M1.5 -2.6v4" stroke="#dca018" stroke-width="0.7"/>
  </g>
  <path d="M491.5 390.5l.8-1.6M494 392.5l1.5-.8M478.5 406.5l-1.5 1M480.5 408.3l-.7 1.4" stroke="#9ec4ee" stroke-width="0.9"/>
  <!-- joy -->
  <circle cx="512" cy="399.5" r="7.5" fill="#f7c02a"/>
  <path d="M507.8 398.2l2 -1.2M516.2 398.2l-2-1.2" stroke="#5a3a10" stroke-width="1"/>
  <path d="M507 401h10c-.5 3-2.5 4.6-5 4.6s-4.5-1.6-5-4.6z" fill="#5a3a10"/>
  <path d="M508.5 403.5c1 .8 2 1.2 3.5 1.2s2.5-.4 3.5-1.2" stroke="#fff" stroke-width="0.9" fill="none"/>
  <path d="M504 398c-1.5 1.5-1.8 4-.5 5 1.2.6 2.2-.6 2-2zM520 398c1.5 1.5 1.8 4 .5 5-1.2.6-2.2-.6-2-2z" fill="#4aa0e8"/>
  <!-- wow -->
  <circle cx="538" cy="399.5" r="7.5" fill="#f7c02a"/>
  <ellipse cx="535.3" cy="397.3" rx="1" ry="1.4" fill="#4a2a08"/><ellipse cx="540.7" cy="397.3" rx="1" ry="1.4" fill="#4a2a08"/>
  <ellipse cx="538" cy="402.5" rx="2" ry="2.5" fill="#4a2a08"/>
  <!-- cry -->
  <circle cx="564.8" cy="399.5" r="7.5" fill="#f7c02a"/>
  <path d="M561 398.5h2.2M566.5 398.5h2.2" stroke="#4a2a08" stroke-width="1.2"/>
  <path d="M562 404c1.8-1.5 3.8-1.5 5.6 0" stroke="#4a2a08" stroke-width="1.1" fill="none"/>
  <path d="M561 400c-1 1.8-2 3.5-.5 4.5 1.5.5 2-1.5 1.5-2.5z" fill="#4aa0e8"/>
  <!-- thinking -->
  <circle cx="591.7" cy="398.5" r="7.5" fill="#f7c02a"/>
  <path d="M588.5 395.5l2-1M593.5 395.5c1-.5 2-.3 2.6.3" stroke="#4a2a08" stroke-width="0.9" fill="none"/>
  <circle cx="589.5" cy="397.5" r="0.9" fill="#4a2a08"/><circle cx="594.5" cy="397.8" r="0.9" fill="#4a2a08"/>
  <path d="M590 401.5c1.5-.3 3-.3 4 .3" stroke="#4a2a08" stroke-width="0.9" fill="none"/>
  <path d="M585.5 405c1-2.5 3.5-3 6-2.5l.5 1.5c-1 .3-2 .3-2.5.3l1.5 2.5c-.8 1-3 1.5-5.5-1.8z" fill="#e8a818"/>
  <!-- thumbs down -->
  <path d="M613 400h3.5l2 5c.3 1.2 2.2 1 2.2-.6l-.4-3.6h3.8c1 0 1.6-.8 1.4-1.7l-1.2-5.4c-.2-.7-.8-1.2-1.5-1.2H618c-.7 0-1 .3-1.5.6H613z" fill="#f7c02a"/>
  <rect x="611.5" y="391.8" width="3.2" height="8.4" rx="0.8" fill="#e2a412"/>
</svg>

<!-- control buttons -->
<div class="cb" style="left:324.5px;width:58.5px;background:#2b2c30"></div>
<div class="cb" style="left:351px;width:32px;background:#3c3d41"></div>
<div class="cb" style="left:388.5px;width:58.5px;background:#2b2c30"></div>
<div class="cb" style="left:415px;width:32px;background:#3c3d41"></div>
<div class="cb" style="left:452.5px;width:36.5px;background:#3c3d41"></div>
<div class="cb" style="left:494.6px;width:37.5px;border-radius:9px;background:#a8c7fa"></div>
<div class="cb" style="left:538px;width:36.5px;background:#3c3d41"></div>
<div class="cb" style="left:580.5px;width:37px;background:#3c3d41"></div>
<div class="cb" style="left:623px;width:24.5px;background:#3c3d41"></div>
<div class="cb" style="left:652px;width:48px;background:#dc362e"></div>
<svg class="a" style="left:0;top:0" width="1" height="1" fill="none" stroke="#e3e3e3" stroke-width="1.4">
  <!-- dots -->
  <circle cx="335.5" cy="439.5" r="1" fill="#a8c7fa" stroke="none"/><circle cx="339.5" cy="439.5" r="1" fill="#a8c7fa" stroke="none"/><circle cx="343.5" cy="439.5" r="1" fill="#a8c7fa" stroke="none"/>
  <!-- mic -->
  <rect x="364.8" y="432.5" width="4.4" height="8.5" rx="2.2" fill="#e3e3e3" stroke="none"/>
  <path d="M362.5 438.5a4.5 4.5 0 0 0 9 0M367 443v2.5"/>
  <!-- caret up -->
  <path d="M401 441l2.6-2.6 2.6 2.6" stroke="#c0c0c0" stroke-width="1.1"/>
  <!-- camera -->
  <rect x="425" y="434.5" width="8.8" height="9.5" rx="1"/><path d="M433.8 437.5l3.2-2.3v8l-3.2-2.3"/>
  <!-- cc -->
  <rect x="463.8" y="434" width="13.5" height="10.8" rx="1.2" fill="#e3e3e3" stroke="none"/>
  <path d="M469.2 437.4h-2.6v3.8h2.6M474.6 437.4H472v3.8h2.6" stroke="#3c3d41" stroke-width="1.2"/>
  <!-- present -->
  <rect x="548.5" y="433.5" width="15" height="11.5" rx="0.8" stroke-width="1.3"/>
  <path d="M556 442.2v-5.2M553.5 439.3l2.5-2.5 2.5 2.5" stroke-width="1.3" fill="#e3e3e3"/>
  <!-- more vert -->
  <circle cx="635.2" cy="434.5" r="1.3" fill="#e3e3e3" stroke="none"/><circle cx="635.2" cy="439.5" r="1.3" fill="#e3e3e3" stroke="none"/><circle cx="635.2" cy="444.5" r="1.3" fill="#e3e3e3" stroke="none"/>
</svg>
<!-- emoji icon -->
<svg class="a" style="left:506px;top:432px" width="16" height="16" viewBox="0 0 16 16"><circle cx="8" cy="8" r="7" fill="#062e6f"/><circle cx="5.6" cy="6.2" r="1" fill="#a8c7fa"/><circle cx="10.4" cy="6.2" r="1" fill="#a8c7fa"/><path d="M4.8 9.2a3.4 3.4 0 0 0 6.4 0z" fill="#a8c7fa"/></svg>
<!-- hand -->
<svg class="a" style="left:591px;top:431px" width="16" height="17" viewBox="0 0 16 17" fill="none" stroke="#e3e3e3" stroke-width="1.3" stroke-linejoin="round"><path d="M4.5 9V4.2a1 1 0 0 1 2 0V8M6.5 7.5V2.5a1 1 0 0 1 2 0v5M8.5 7.5V3.2a1 1 0 0 1 2 0V8M10.5 8V5a1 1 0 0 1 2 0v5.5c0 3-2 5.2-4.6 5.2-2.2 0-3.4-1-4.4-2.8L2 9.8c-.5-.9.6-1.7 1.4-1L4.5 10"/></svg>
<!-- end call -->
<svg class="a" style="left:666px;top:434px" width="20" height="10" viewBox="0 0 20 10"><path d="M10 2.2c3 0 5.8 1 7.6 2.6.4.4.4 1 0 1.4l-1.5 1.5c-.4.4-1 .4-1.4 0l-1.6-1.3c-.3-.2-.4-.5-.4-.8V4.3c-.9-.3-1.8-.4-2.7-.4s-1.8.1-2.7.4v1.3c0 .3-.1.6-.4.8L5.3 7.7c-.4.4-1 .4-1.4 0L2.4 6.2c-.4-.4-.4-1 0-1.4C4.2 3.2 7 2.2 10 2.2z" fill="#fff"/></svg>

<!-- right icons -->
<svg class="a" style="left:0;top:0" width="1" height="1" fill="none" stroke="#e3e3e3" stroke-width="1.4">
  <circle cx="871.8" cy="440.2" r="6.5"/><path d="M871.8 439v4.5" stroke-width="1.6"/><circle cx="871.8" cy="436.6" r="0.9" fill="#e3e3e3" stroke="none"/>
  <circle cx="901.5" cy="436" r="3" fill="#e3e3e3" stroke="none"/><path d="M895.5 446v-1.6c0-2.2 2.7-3.6 6-3.6s6 1.4 6 3.6v1.6z" fill="#e3e3e3" stroke="none"/>
  <path d="M906.5 433a3 3 0 0 1 0 6z" fill="#e3e3e3" stroke="none"/><path d="M909 441c1.8.6 3 1.8 3 3.4V446h-2.5v-1.6c0-1.3-.2-2.4-.5-3.4z" fill="#e3e3e3" stroke="none"/>
  <path d="M929.5 433.5h12.5v10h-10l-2.5 2.5z"/><path d="M932 436.5h7.5M932 439h7.5M932 441h5" stroke-width="1.1"/>
  <path d="M997 439.5v-2.5a3 3 0 0 1 6 0v2.5"/><path d="M1000.8 446h-5.3v-6.5h8.5v1.5"/>
  <circle cx="1003" cy="444" r="3" fill="#e3e3e3" stroke="none"/><path d="M1003 442.8v2.4" stroke="#131316" stroke-width="1"/>
</svg>
<svg class="a" style="left:0;top:0" width="1" height="1" fill="#e3e3e3">
  <circle cx="963.5" cy="435.5" r="1.3"/><circle cx="968" cy="435.5" r="1.3"/><circle cx="972.5" cy="435.5" r="1.3"/>
  <circle cx="963.5" cy="440" r="1.3"/><circle cx="968" cy="440" r="1.3"/><circle cx="972.5" cy="440" r="1.3"/>
  <circle cx="963.5" cy="444.5" r="1.3"/><circle cx="968" cy="444.5" r="1.3"/><circle cx="972.5" cy="444.5" r="1.3"/>
</svg>
<div class="a" style="left:904px;top:418px;width:18.5px;height:13px;border-radius:7px;background:#5f6063"></div>
<div class="a" style="left:908px;top:420.3px;font-size:7.6px;font-weight:bold;color:#e3e3e3">16</div>
<!-- taskbar -->
<div class="a" style="left:0;top:466px;width:1024px;height:27px;background:#d8e6ee"></div>
<div class="a" style="left:33px;top:466.5px;width:190.5px;height:26.5px;background:#fbfdfe"></div>
<svg class="a" style="left:0;top:0" width="1" height="1" fill="#111">
  <rect x="10.3" y="474.7" width="5.4" height="5" /><rect x="16.6" y="474.7" width="5.4" height="5"/>
  <rect x="10.3" y="480.5" width="5.4" height="4.8"/><rect x="16.6" y="480.5" width="5.4" height="4.8"/>
</svg>
<svg class="a" style="left:0;top:0" width="1" height="1" fill="none" stroke="#222" stroke-width="1.1">
  <circle cx="47" cy="478" r="3.6"/><path d="M44.5 480.6l-3.2 3.2"/>
</svg>
<div class="a" style="left:58.5px;top:474px;font-size:10.3px;color:#333">Поиск</div>
<!-- search deco -->
<svg class="a" style="left:0;top:0" width="1" height="1">
  <defs>
    <linearGradient id="hill" x1="0" x2="1" y1="0" y2="0"><stop offset="0" stop-color="#b8b860"/><stop offset="0.35" stop-color="#6a9a48"/><stop offset="1" stop-color="#1e7a38"/></linearGradient>
    <linearGradient id="cop1" x1="0" y1="0" x2="0" y2="1"><stop offset="0" stop-color="#2a7ae0"/><stop offset="0.5" stop-color="#38c0a0"/><stop offset="1" stop-color="#f0c020"/></linearGradient>
    <linearGradient id="cop2" x1="0" y1="0" x2="0" y2="1"><stop offset="0" stop-color="#c050d8"/><stop offset="0.6" stop-color="#f06090"/><stop offset="1" stop-color="#f88040"/></linearGradient>
  </defs>
  <ellipse cx="185" cy="471.5" rx="5" ry="1.8" fill="#b8d8ec"/><ellipse cx="213" cy="469.5" rx="5" ry="1.6" fill="#c8e0f0"/>
  <rect x="194.5" y="473" width="3" height="8" fill="#c07a48"/><rect x="198" y="475" width="3.5" height="6" fill="#a86438"/>
  <rect x="201.5" y="474" width="4" height="7" fill="#c07a48"/><rect x="205.5" y="475" width="3" height="6" fill="#a86438"/>
  <rect x="208.5" y="474" width="3" height="7" fill="#c07a48"/><rect x="211.5" y="475" width="3.5" height="6" fill="#a86438"/>
  <path d="M190 493c1-8 6-12.5 15-12.5s15 4.5 17.5 12.5z" fill="url(#hill)"/>
  <path d="M187 493l-1-7-4-5M186 486l4-5M186.5 488l-3 -2" stroke="#8a5030" stroke-width="1.1" fill="none"/>
  <circle cx="181" cy="481" r="2.6" fill="#f4c8c8"/><circle cx="188" cy="477" r="2.8" fill="#f0bcbc"/><circle cx="192" cy="483" r="2.2" fill="#f6d0d0"/>
  <circle cx="178.5" cy="488" r="2.2" fill="#f0c0c0"/><circle cx="183" cy="476" r="1.8" fill="#eab0b8"/>
</svg>
<!-- app icons -->
<svg class="a" style="left:0;top:0" width="1" height="1">
  <!-- copilot -->
  <path d="M236.5 473c.5-1 1.3-1.3 2.3-1.3h5.5c1 0 1.6.9 1.2 1.8l-4.8 11.5c-.4 1-1.2 1.6-2.2 1.6h-3.3c-1.3 0-2-1.1-1.7-2.3z" fill="url(#cop1)"/>
  <path d="M242 477c.4-1 1.2-1.5 2.2-1.5h4c1.2 0 1.9 1.1 1.5 2.2l-3.2 8.2c-.4 1-1.3 1.5-2.3 1.5h-4.6c-1 0-1.6-.9-1.2-1.8z" fill="url(#cop2)"/>
  <!-- opera -->
  <ellipse cx="274.9" cy="479" rx="7" ry="7.3" fill="#e0101e"/><ellipse cx="274.9" cy="479" rx="3" ry="5.2" fill="#d8e6ee"/>
  <!-- pdf -->
  <rect x="301" y="471" width="12.5" height="16" fill="#d42a2a"/><rect x="313.5" y="473" width="1.5" height="14.5" fill="#b0b0b0"/>
  <text x="302.5" y="484" font-size="4.5" font-weight="bold" fill="#fff" font-family="Liberation Sans">PDF</text>
  <!-- folder -->
  <path d="M334 473.5h5l1.5 1.5h7.5v10h-14z" fill="#e8b830"/><rect x="334" y="476.5" width="14" height="8.5" fill="#f8d060"/>
  <rect x="338" y="479" width="6" height="6" fill="#3a7ad8"/>
  <!-- chrome -->
  <rect x="358" y="466.5" width="30.5" height="26.5" fill="#e6eef3"/>
  <circle cx="372.5" cy="479" r="7" fill="#2a9a48"/>
  <path d="M372.5 472a7 7 0 0 1 6.1 3.5h-6.1a3.5 3.5 0 0 0-3 1.8l-3-5.3a7 7 0 0 1 6-0z" fill="#e8372c"/>
  <path d="M378.6 475.5a7 7 0 0 1-6.1 10.5l3-5.3a3.5 3.5 0 0 0 .1-3.4z" fill="#f8c020"/>
  <circle cx="372.5" cy="479" r="2.8" fill="#3a7ae8" stroke="#fff" stroke-width="1"/>
  <circle cx="377.5" cy="484" r="3.5" fill="#2a8ad8" stroke="#e6eef3" stroke-width="0.8"/>
  <text x="375.6" y="486" font-size="4.5" fill="#fff" font-family="Liberation Sans" font-weight="bold">A</text>
  <!-- telegram -->
  <circle cx="407" cy="478.5" r="7" fill="#2a9ad8"/><path d="M403 478.5l8-3-1.5 7-2.5-2-1.2 1.5v-2.2l3-3-4 2.5z" fill="#fff"/>
  <circle cx="411.5" cy="484" r="3" fill="#7a7a7a" stroke="#d8e6ee" stroke-width="0.8"/>
  <!-- word -->
  <rect x="433" y="472" width="13" height="14" fill="#2a5ab8"/><rect x="436" y="473" width="10" height="12" fill="#e8eef8"/>
  <path d="M437.5 476h7M437.5 478.5h7M437.5 481h7" stroke="#2a5ab8" stroke-width="0.8"/>
  <rect x="432" y="475" width="7" height="8" fill="#1a4aa8"/>
  <!-- underlines -->
  <rect x="295" y="491.5" width="27" height="1.5" fill="#2a8ad8"/>
  <rect x="328" y="491.5" width="28" height="1.5" fill="#2a8ad8"/>
  <rect x="359" y="491.5" width="29" height="1.5" fill="#2a8ad8"/>
  <rect x="394" y="491.5" width="27" height="1.5" fill="#2a8ad8"/>
  <rect x="426" y="491.5" width="27" height="1.5" fill="#2a8ad8"/>
</svg>
<!-- tray -->
<svg class="a" style="left:0;top:0" width="1" height="1">
  <path d="M806 474c2-2 6-2.5 9-1 1.5 2 1.8 5 1 8-.5 3-2.5 5-5 5.5-2.5-.5-4.5-2-5-5 .5-2-.5-5 0-7.5z" fill="#3a0a48"/>
  <circle cx="813" cy="476" r="1.3" fill="#fff"/>
</svg>
<div class="a" style="left:824.5px;top:474.5px;font-size:9.5px;color:#333">Result</div>
<svg class="a" style="left:0;top:0" width="1" height="1" fill="none" stroke="#222" stroke-width="1">
  <path d="M867.8 481.8l3.1-3.2 3.1 3.2"/>
  <rect x="884.5" y="474.8" width="4.5" height="7.2" rx="2" fill="#1a1a1a" stroke="none"/><path d="M886.8 482v2.8" stroke-width="1.4"/><path d="M884.8 485h4" stroke-width="1"/>
  <rect x="898.5" y="477.2" width="8.5" height="4.8" fill="#1a1a1a" stroke="none"/><rect x="907" y="478.4" width="1.2" height="2.4" fill="#1a1a1a" stroke="none"/><path d="M898 476.6h2.5" stroke-width="0.8"/>
  <path d="M923.3 476a7.6 7.6 0 0 0-7.6 7.6M923.3 478.5a5.1 5.1 0 0 0-5.1 5.1M923.3 481a2.6 2.6 0 0 0-2.6 2.6" stroke-width="0.9"/>
  <circle cx="922.8" cy="483.1" r="0.7" fill="#222" stroke="none"/>
  <path d="M929.7 478h2l3-2.6v9.7l-3-2.6h-2z" stroke-width="0.9"/><path d="M936.8 477.8a3 3 0 0 1 0 4.6M938.8 476.2a5.4 5.4 0 0 1 0 7.8" stroke-width="0.9"/>
  <path d="M997 475h11v8h-4.2l-1.6 1.6-1.6-1.6H997z" stroke-width="1"/>
</svg>
<div class="a" style="left:956.5px;top:470px;font-size:7.4px;color:#222">11:09</div>
<div class="a" style="left:947.3px;top:481.7px;font-size:7.4px;color:#222">15.04.2025</div>
</body></html>
